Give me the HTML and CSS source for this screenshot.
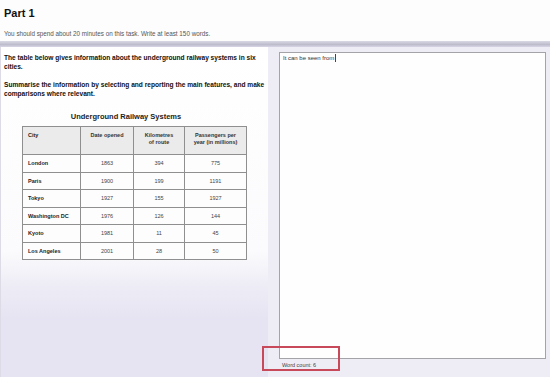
FILE: index.html
```html
<!DOCTYPE html>
<html lang="en">
<head>
    <meta charset="UTF-8">
    <title>Part 1</title>
    <link rel="stylesheet" href="styles.css">
</head>
<body>
    <div class="header">
        <h1>Part 1</h1>
        <p class="instructions">You should spend about 20 minutes on this task. Write at least 150 words.</p>
    </div>
    <div class="divider"></div>

    <div class="main">
        <div class="task">
            <p class="prompt">The table below gives information about the underground railway systems in six cities.</p>
            <p class="prompt">Summarise the information by selecting and reporting the main features, and make comparisons where relevant.</p>

            <div class="table-title">Underground Railway Systems</div>
            <table class="data-table">
                <colgroup>
                    <col class="col-city">
                    <col class="col-date">
                    <col class="col-km">
                    <col class="col-pass">
                </colgroup>
                <tr class="head">
                    <th class="city">City</th>
                    <th>Date opened</th>
                    <th>Kilometres<br>of route</th>
                    <th>Passengers per<br>year (in millions)</th>
                </tr>
                <tr><td class="city">London</td><td>1863</td><td>394</td><td>775</td></tr>
                <tr><td class="city">Paris</td><td>1900</td><td>199</td><td>1191</td></tr>
                <tr><td class="city">Tokyo</td><td>1927</td><td>155</td><td>1927</td></tr>
                <tr><td class="city">Washington DC</td><td>1976</td><td>126</td><td>144</td></tr>
                <tr><td class="city">Kyoto</td><td>1981</td><td>11</td><td>45</td></tr>
                <tr><td class="city">Los Angeles</td><td>2001</td><td>28</td><td>50</td></tr>
            </table>
        </div>

        <div class="answer">
            <div class="answer-box">It can be seen from<span class="caret"></span></div>
            <div class="word-count">Word count: 6</div>
        </div>
    </div>
</body>
</html>
```

FILE: styles.css
```css
html, body {
    margin: 0;
    padding: 0;
    width: 100%;
    height: 100%;
}

body {
    font-family: "Liberation Sans", Arial, sans-serif;
    background: #e7e5f2;
    color: #222;
    overflow: hidden;
}

.header {
    height: 41px;
    background: #fdfdfd;
    padding: 0 4px;
    box-sizing: border-box;
}

h1 {
    margin: 0;
    padding-top: 8px;
    font-size: 11px;
    font-weight: bold;
    color: #111;
    line-height: 11px;
}

.instructions {
    margin: 11px 0 0;
    font-size: 6.3px;
    color: #555;
}

.divider {
    height: 6px;
    background: linear-gradient(180deg, #d9d8e4 0%, #bdbccd 60%, #d8d6e6 100%);
}

.main {
    display: grid;
    grid-template-columns: 268px 1fr;
    height: 330px;
}

.task {
    background: linear-gradient(180deg, #ffffff 0%, #fbfbfd 62%, #eeedf6 72%, #e6e4f2 82%);
    padding: 6px 1px 0 3px;
    border-left: 1px solid #dcdbe6;
}

.prompt {
    margin: 0 0 9px;
    font-size: 6.6px;
    font-weight: bold;
    line-height: 9px;
    color: #111;
}

.table-title {
    margin-top: 14px;
    width: 244px;
    text-align: center;
    font-size: 7.5px;
    font-weight: bold;
    color: #222;
}

.data-table {
    margin: 5px 0 0 18px;
    border-collapse: collapse;
    table-layout: fixed;
    width: 224px;
    font-size: 5.5px;
    border: 1px solid #8f8f8f;
}

.col-city { width: 58px; }
.col-date { width: 53px; }
.col-km { width: 51px; }
.col-pass { width: 62px; }

.data-table th, .data-table td {
    border: 1px solid #8f8f8f;
    text-align: center;
    vertical-align: middle;
    color: #444;
    padding: 0;
}

.data-table th {
    background: #ebebeb;
    height: 28px;
    font-weight: bold;
    color: #333;
    line-height: 7px;
    vertical-align: top;
    padding-top: 5px;
    box-sizing: border-box;
}

.data-table td {
    height: 16.5px;
    background: #fdfdfd;
}

.data-table .city {
    text-align: left;
    padding-left: 5px;
    font-weight: bold;
    color: #222;
}

.answer {
    display: flex;
    flex-direction: column;
    padding: 5px 4px 0 11px;
    background: #eeedf6;
}

.answer-box {
    height: 303px;
    background: #fefefe;
    border: 1px solid #a4a4a8;
    padding: 1px 3px;
    font-size: 6px;
    color: #333;
    line-height: 8px;
}

.caret {
    display: inline-block;
    width: 1px;
    height: 8px;
    background: #444;
    vertical-align: top;
    margin-left: 1px;
}

.word-count {
    position: relative;
    margin-top: 3px;
    padding-left: 3px;
    font-size: 5.5px;
    color: #444;
    line-height: 7px;
}

.word-count::before {
    content: "";
    position: absolute;
    left: -17px;
    top: -16px;
    width: 74px;
    height: 21px;
    border: 2px solid #c84a5a;
}
```
